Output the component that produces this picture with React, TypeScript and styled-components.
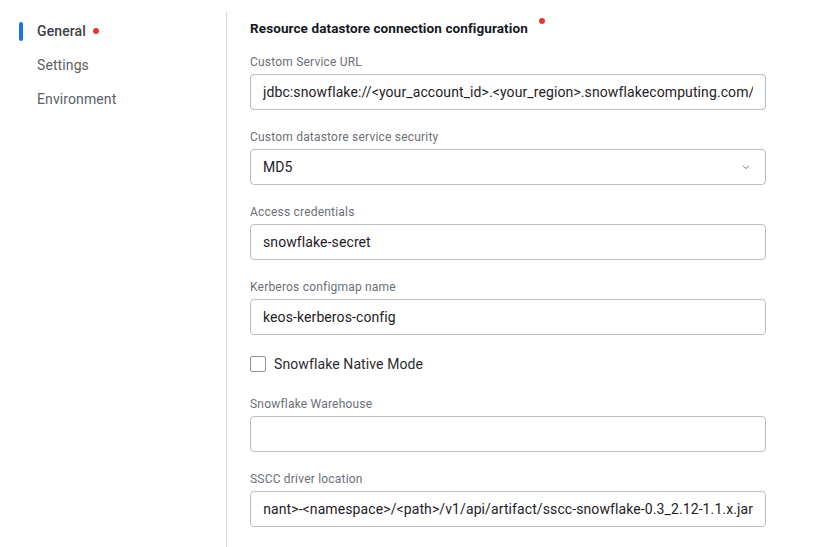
import React from 'react';
import styled, { createGlobalStyle } from 'styled-components';

const GlobalStyle = createGlobalStyle`
  html, body {
    margin: 0;
    padding: 0;
    background: #ffffff;
  }
  body {
    font-family: Roboto, "Liberation Sans", Arial, sans-serif;
    color: #1f2126;
  }
`;

const Page = styled.div`
  display: flex;
  width: 822px;
  height: 547px;
  overflow: hidden;
`;

const Sidebar = styled.nav`
  width: 226px;
  flex-shrink: 0;
  padding-top: 20px;
`;

const NavList = styled.ul`
  list-style: none;
  margin: 0;
  padding: 0;
  display: flex;
  flex-direction: column;
  gap: 12px;
`;

const NavItem = styled.li<{ active?: boolean }>`
  position: relative;
  display: flex;
  align-items: center;
  height: 22px;
  padding-left: 37px;
  font-size: 14px;
  letter-spacing: 0.1px;
  font-weight: ${p => (p.active ? 500 : 400)};
  color: ${p => (p.active ? '#3c3f46' : '#5c5f66')};

  &::before {
    content: '';
    display: ${p => (p.active ? 'block' : 'none')};
    position: absolute;
    left: 19px;
    top: 2px;
    width: 4px;
    height: 19px;
    border-radius: 2px;
    background: #1a73e8;
  }
`;

const Dot = styled.span<{ raised?: boolean }>`
  display: inline-block;
  width: 6px;
  height: 6px;
  border-radius: 50%;
  background: #e8382f;
  margin-left: ${p => (p.raised ? '11px' : '7px')};
  align-self: ${p => (p.raised ? 'flex-start' : 'center')};
  margin-top: ${p => (p.raised ? '-2px' : '0')};
`;

const Divider = styled.div`
  width: 1px;
  margin-top: 12px;
  background: #d6d8dd;
  flex-shrink: 0;
`;

const Content = styled.main`
  padding: 20px 0 0 23px;
  width: 516px;
  display: flex;
  flex-direction: column;
`;

const Title = styled.h2`
  display: flex;
  align-items: center;
  margin: 0 0 19px;
  font-size: 13.5px;
  letter-spacing: 0.1px;
  font-weight: 700;
  color: #15171b;
  height: 18px;
`;

const FieldGroup = styled.div`
  display: flex;
  flex-direction: column;
  margin-bottom: 20px;
`;

const Label = styled.label`
  font-size: 12px;
  letter-spacing: 0.2px;
  color: #6c6f76;
  line-height: 14px;
  margin-bottom: 5px;
`;

const Box = styled.div`
  box-sizing: border-box;
  height: 36px;
  border: 1px solid #b9bdc5;
  border-radius: 4px;
  padding: 0 12px;
  display: flex;
  align-items: center;
  font-size: 14px;
  letter-spacing: 0.1px;
  color: #1f2126;
  background: #fff;
`;

const Clip = styled.div<{ end?: boolean }>`
  flex: 1;
  overflow: hidden;
  white-space: nowrap;
  display: flex;
  justify-content: ${p => (p.end ? 'flex-end' : 'flex-start')};
`;

const Chevron = styled.svg`
  width: 10px;
  height: 10px;
  flex-shrink: 0;
  margin-right: 2px;
`;

const CheckRow = styled.label`
  display: flex;
  align-items: center;
  gap: 8px;
  font-size: 14px;
  letter-spacing: 0.1px;
  color: #2a2c31;
  margin: 1px 0 25px;
`;

const CheckBox = styled.span`
  box-sizing: border-box;
  width: 16px;
  height: 16px;
  border: 1px solid #8e929a;
  border-radius: 2px;
  background: #fff;
`;

const Field = ({ label, value, end, select }: { label: string; value?: string; end?: boolean; select?: boolean }) => (
  <FieldGroup>
    <Label>{label}</Label>
    <Box>
      <Clip end={end}>
        <span>{value}</span>
      </Clip>
      {select && (
        <Chevron viewBox="0 0 10 10">
          <path d="M2 4 L5 6.5 L8 4" fill="none" stroke="#7b7f87" strokeWidth="1" />
        </Chevron>
      )}
    </Box>
  </FieldGroup>
);

export default function App() {
  return (
    <>
      <GlobalStyle />
      <Page>
        <Sidebar>
          <NavList>
            <NavItem active>
              General
              <Dot />
            </NavItem>
            <NavItem>Settings</NavItem>
            <NavItem>Environment</NavItem>
          </NavList>
        </Sidebar>
        <Divider />
        <Content>
          <Title>
            Resource datastore connection configuration
            <Dot raised />
          </Title>
          <Field label="Custom Service URL" value="jdbc:snowflake://<your_account_id>.<your_region>.snowflakecomputing.com/" />
          <Field label="Custom datastore service security" value="MD5" select />
          <Field label="Access credentials" value="snowflake-secret" />
          <Field label="Kerberos configmap name" value="keos-kerberos-config" />
          <CheckRow>
            <CheckBox />
            Snowflake Native Mode
          </CheckRow>
          <Field label="Snowflake Warehouse" value="" />
          <Field
            label="SSCC driver location"
            value="http://<tenant>-<namespace>/<path>/v1/api/artifact/sscc-snowflake-0.3_2.12-1.1.x.jar"
            end
          />
        </Content>
      </Page>
    </>
  );
}
